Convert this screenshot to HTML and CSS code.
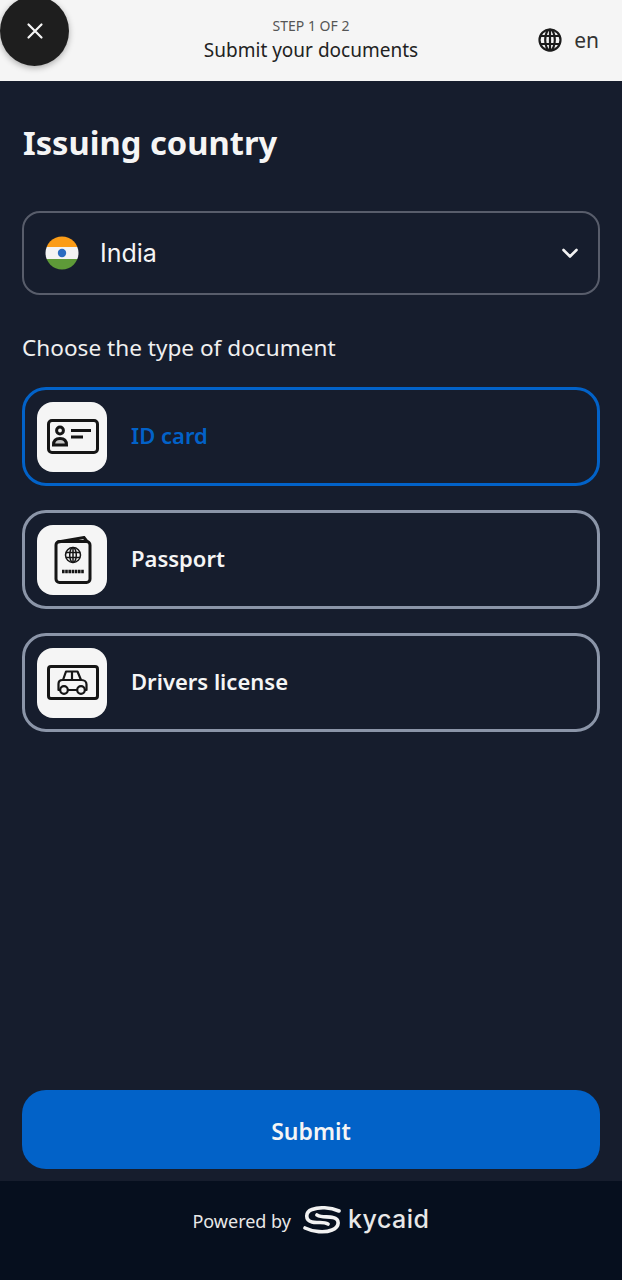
FILE: index.html
```html
<!DOCTYPE html>
<html lang="en">
<head>
    <meta charset="UTF-8">
    <meta name="viewport" content="width=device-width, initial-scale=1.0">
    <title>Submit your documents</title>
    <link rel="stylesheet" href="styles.css">
</head>
<body>
    <header class="top-bar">
        <button class="close-btn" aria-label="Close">
            <svg width="18" height="18" viewBox="0 0 18 18" fill="none" stroke="#f5f5f5" stroke-width="2.2" stroke-linecap="round"><path d="M2.500 2.500l13 13M15.500 2.500l-13 13"/></svg>
        </button>
        <div class="top-title">
            <div class="step">STEP 1 OF 2</div>
            <div class="step-name">Submit your documents</div>
        </div>
        <div class="lang">
            <svg width="24" height="24" viewBox="0 0 24 24" fill="none" stroke="#1c1c1c" stroke-width="2.2"><circle cx="12" cy="12" r="10.5"/><ellipse cx="12" cy="12" rx="4.8" ry="10.5"/><path d="M12 1.500v21M2.400 8h19.200M2.400 16h19.200"/></svg>
            <span>en</span>
        </div>
    </header>

    <main class="content">
        <h1>Issuing country</h1>

        <div class="country-select">
            <svg class="flag" width="34" height="34" viewBox="0 0 34 34">
                <defs><clipPath id="flagClip"><circle cx="17" cy="17" r="16.500"/></clipPath></defs>
                <g clip-path="url(#flagClip)">
                    <rect width="34" height="11" fill="#fb9c17"/>
                    <rect y="11" width="34" height="12" fill="#f3f3f3"/>
                    <rect y="23" width="34" height="11" fill="#5e9a38"/>
                </g>
                <circle cx="17" cy="17" r="4.200" fill="#2a6cc0"/>
            </svg>
            <span class="country-name">India</span>
            <svg class="chevron" width="18" height="18" viewBox="0 0 18 18" fill="none" stroke="#f2f2f2" stroke-width="2.6" stroke-linecap="round" stroke-linejoin="round"><path d="M2.500 6l6.500 6.500L15.500 6"/></svg>
        </div>

        <p class="doc-label">Choose the type of document</p>

        <div class="doc-list">
            <div class="doc-card active">
                <div class="doc-icon">
                    <svg width="52" height="36" viewBox="0 0 52 36" fill="none" stroke="#151515" stroke-width="3"><rect x="1.500" y="1.500" width="49" height="32" rx="3.500"/><circle cx="13" cy="11.500" r="3.400"/><path d="M6.500 26c0-4.500 2.500-6.500 6.500-6.500s6.500 2 6.500 6.500z" fill="#151515" fill-opacity=".2"/><path d="M24 11.500h20M24 18h12"/></svg>
                </div>
                <span class="doc-name">ID card</span>
            </div>
            <div class="doc-card">
                <div class="doc-icon">
                    <svg width="38" height="48" viewBox="0 0 38 48" fill="none" stroke="#151515" stroke-width="3"><path d="M4 6l26-4.500 3 4"/><rect x="2" y="5.500" width="34" height="41" rx="3.500"/><g stroke-width="1.500"><circle cx="19" cy="19" r="7.500"/><ellipse cx="19" cy="19" rx="3.300" ry="7.500"/><path d="M19 11.500v15M12 16.500h14M12 21.500h14"/></g><path d="M8 35.500h22" stroke-width="3.400" stroke-dasharray="2.600 .6"/></svg>
                </div>
                <span class="doc-name">Passport</span>
            </div>
            <div class="doc-card">
                <div class="doc-icon">
                    <svg width="52" height="36" viewBox="0 0 52 36" fill="none" stroke="#151515" stroke-width="3" stroke-linejoin="round"><rect x="1.500" y="1.500" width="49" height="32" rx="2.500"/><g stroke-width="2.200"><path d="M16 15l3-8.500h11.500l3.500 8.500M25 6.500V15"/><path d="M13 25h-1.500V19c0-2.500 1.500-4 4-4h19c3 0 5 2 5 4.500V25H38M21 25h9"/><circle cx="17" cy="25" r="3.800"/><circle cx="34" cy="25" r="3.800"/></g></svg>
                </div>
                <span class="doc-name">Drivers license</span>
            </div>
        </div>

        <button class="submit-btn">Submit</button>
    </main>

    <footer class="footer">
        <span class="powered">Powered by</span>
        <svg class="logo-mark" width="38" height="30" viewBox="6 6 38 30" fill="none" stroke="#f2f2f2" stroke-width="3.600" stroke-linecap="round"><path d="M42 11C33 7 22 7 15 9.500 8 12 8 20 15 22c5 1.500 11-1 16 2"/><path d="M8 28c8 4 20 5 27 2 8-3 8-11 1-12.500-5-1.500-11 .5-16-2.500"/></svg>
        <span class="logo-text">kycaid</span>
    </footer>
</body>
</html>
```

FILE: styles.css
```css
/* General Styling */
* {
    box-sizing: border-box;
}

body {
    font-family: 'Noto Sans', 'Open Sans', sans-serif;
    background-color: #161d2d;
    color: #f5f5f5;
    margin: 0;
    padding: 0;
    height: 1280px;
    display: flex;
    flex-direction: column;
    overflow: hidden;
}

/* Top Bar */
.top-bar {
    height: 81px;
    flex: none;
    background-color: #f5f5f5;
    color: #222;
    display: flex;
    align-items: center;
    justify-content: center;
    position: relative;
}

.close-btn {
    position: absolute;
    left: 0;
    top: -4px;
    width: 69px;
    height: 70px;
    border: none;
    border-radius: 50%;
    background-color: #1e1e1e;
    box-shadow: 0 2px 6px rgba(0, 0, 0, 0.3);
    display: flex;
    align-items: center;
    justify-content: center;
    padding: 0;
}

.top-title {
    text-align: center;
    margin-top: -1px;
}

.step {
    font-size: 14px;
    line-height: 18px;
    margin-bottom: 1px;
    color: #555;
}

.step-name {
    font-size: 19px;
    line-height: 28px;
    color: #222;
}

.lang {
    position: absolute;
    right: 23px;
    top: 27px;
    display: flex;
    align-items: center;
    gap: 12px;
    font-size: 21px;
    line-height: 26px;
    color: #333;
}

/* Main Content */
.content {
    flex: 1;
    display: flex;
    flex-direction: column;
    padding: 0 22px 12px 22px;
}

h1 {
    font-size: 32.7px;
    line-height: 44px;
    font-weight: 700;
    margin: 40px 0 46px 1px;
    color: #f5f5f5;
}

.country-select {
    height: 84px;
    border: 2px solid #585d6b;
    border-radius: 18px;
    display: flex;
    align-items: center;
    padding: 0 19px 0 21px;
}

.flag {
    flex: none;
}

.country-name {
    flex: 1;
    font-family: 'Inter', sans-serif;
    font-size: 25px;
    margin-left: 21px;
    color: #f5f5f5;
}

.doc-label {
    font-size: 22.6px;
    line-height: 30px;
    margin: 38px 0 24px;
    color: #f0f0f0;
}

.doc-list {
    display: flex;
    flex-direction: column;
    gap: 24px;
}

.doc-card {
    height: 99px;
    border: 3px solid #8b95a8;
    border-radius: 24px;
    display: flex;
    align-items: center;
    padding-left: 12px;
}

.doc-card.active {
    border-color: #0262c8;
}

.doc-card.active .doc-name {
    color: #0262c8;
}

.doc-icon {
    width: 70px;
    height: 70px;
    flex: none;
    background-color: #f5f5f5;
    border-radius: 16px;
    display: flex;
    align-items: center;
    justify-content: center;
    padding-left: 2px;
}

.doc-name {
    font-size: 22px;
    line-height: 26px;
    font-weight: 600;
    margin-left: 24px;
    margin-top: -3px;
    color: #f5f5f5;
}

/* Submit Button */
.submit-btn {
    margin-top: auto;
    height: 79px;
    width: 100%;
    border: none;
    border-radius: 24px;
    background-color: #0262c8;
    color: #f5f5f5;
    font-family: inherit;
    font-size: 23px;
    font-weight: 600;
    padding-top: 3px;
}

/* Footer */
.footer {
    height: 99px;
    flex: none;
    background-color: #060f1e;
    display: flex;
    align-items: center;
    justify-content: center;
    padding-bottom: 20px;
}

.powered {
    font-size: 18px;
    color: #e8e8e8;
}

.logo-mark {
    margin-left: 12px;
}

.logo-text {
    font-family: 'Inter', sans-serif;
    font-size: 25px;
    font-weight: 500;
    letter-spacing: 0.5px;
    color: #e8e8e8;
    margin-left: 7px;
    margin-top: -3px;
}
```
